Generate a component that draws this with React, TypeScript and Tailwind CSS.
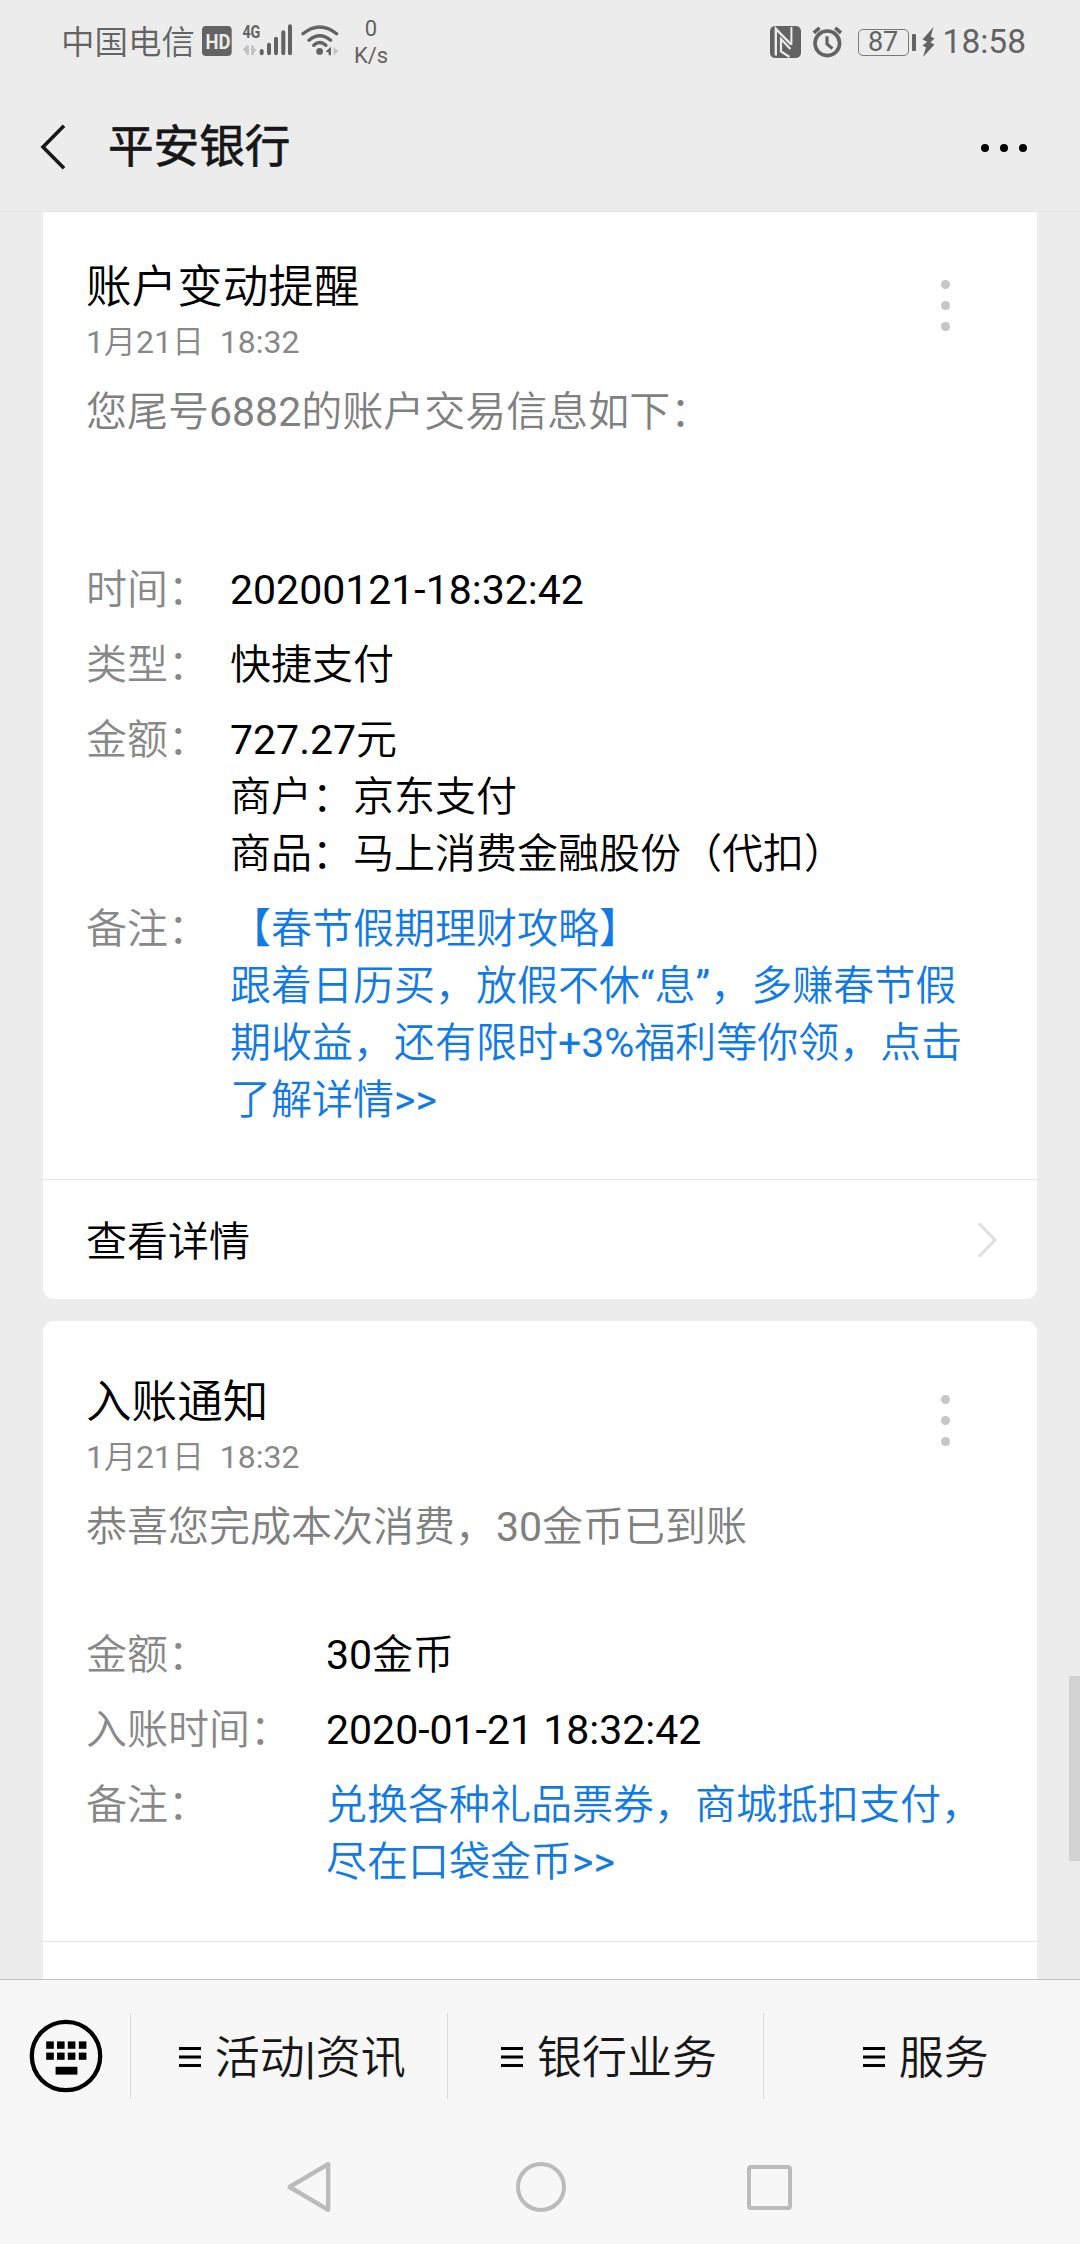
import React from "react";

const FONT = "font-[Roboto,'Noto_Sans_CJK_SC_DemiLight','Noto_Sans_CJK_SC',sans-serif]";
const GREY = "#636363";

type Row = { label: string; value: string; link?: boolean };

type Notice = {
  title: string;
  date: string;
  summary: string;
  rows: Row[];
  wide?: boolean;
  action?: string;
};

const NOTICES: Notice[] = [
  {
    title: "账户变动提醒",
    date: "1月21日\u00a0 18:32",
    summary: "您尾号6882的账户交易信息如下：",
    rows: [
      { label: "时间：", value: "20200121-18:32:42" },
      { label: "类型：", value: "快捷支付" },
      { label: "金额：", value: "727.27元\n商户：京东支付\n商品：马上消费金融股份（代扣）" },
      {
        label: "备注：",
        value: "【春节假期理财攻略】\n跟着日历买，放假不休“息”，多赚春节假\n期收益，还有限时+3%福利等你领，点击\n了解详情>>",
        link: true,
      },
    ],
    action: "查看详情",
  },
  {
    title: "入账通知",
    date: "1月21日\u00a0 18:32",
    summary: "恭喜您完成本次消费，30金币已到账",
    rows: [
      { label: "金额：", value: "30金币" },
      { label: "入账时间：", value: "2020-01-21 18:32:42" },
      { label: "备注：", value: "兑换各种礼品票券，商城抵扣支付，\n尽在口袋金币>>", link: true },
    ],
    wide: true,
  },
];

const TABS = ["活动|资讯", "银行业务", "服务"];

function SignalIcons() {
  return (
    <svg className="ml-[6px] h-[44px] w-[140px] shrink-0" viewBox="200 20 140 44" aria-hidden>
      <rect x="201" y="26" width="29.7" height="30" rx="4" fill={GREY} />
      <text x="204.6" y="48.6" fontSize="20" fontWeight="700" fill="#ececec" textLength="25" lengthAdjust="spacingAndGlyphs">
        HD
      </text>
      <text x="241.4" y="38.3" fontSize="18.5" fontWeight="700" fill={GREY} textLength="18" lengthAdjust="spacingAndGlyphs">
        4G
      </text>
      <path d="M242 49.5 L246.2 44.8 V55 M250.5 44.8 V55 L255.5 50.2 Z" fill="#c2c2c2" />
      <path d="M246.6 45.5 V55 M251.5 45.5 V55" stroke="#c2c2c2" strokeWidth="2.6" />
      <path
        d="M260.7 51 V53.2 M268 44.7 V53.2 M275 38.7 V53.2 M282.3 32.3 V53.2 M289 26.3 V53.2"
        stroke={GREY}
        strokeWidth="4"
        strokeLinecap="round"
      />
      <path
        d="M302 33.8 Q318.7 20.2 335.6 33.8 M308 40.2 Q318.7 31.4 329.6 40.2 M312.8 45.3 Q318.7 39.8 324.8 45.3"
        fill="none"
        stroke={GREY}
        strokeWidth="3.4"
        strokeLinecap="round"
      />
      <circle cx="318.6" cy="51.4" r="3.4" fill={GREY} />
      <path d="M324.6 51.4 L330 46.8 V55.2 H327.6 V52.4 Z" fill={GREY} />
      <path d="M332.6 47 V55.4 L337.2 51 Z" fill="#c2c2c2" />
    </svg>
  );
}

function NfcIcon() {
  return (
    <svg className="h-8 w-[31px]" viewBox="0 0 31 32" fill="none" stroke="#ececec" aria-hidden>
      <rect width="31" height="32" rx="5" fill={GREY} stroke="none" />
      <path d="M5.8 29.5 V2.8 L21.2 18.5" strokeWidth="2.4" />
      <path d="M21.4 1 V19" strokeWidth="2" />
      <path d="M20.4 23 L11 13 V25.5 L19.5 31" strokeWidth="2.2" />
    </svg>
  );
}

function AlarmIcon() {
  return (
    <svg className="ml-[11px] h-8 w-[31px]" viewBox="0 0 31 32" fill="none" stroke={GREY} aria-hidden>
      <circle cx="15.3" cy="17.3" r="12.3" strokeWidth="3.6" />
      <path d="M1.8 6.8 L7.6 1.8 M29 6.8 L23.2 1.8" strokeWidth="3.6" />
      <path d="M15 10.3 V18 L20.4 22.6" strokeWidth="3.2" />
    </svg>
  );
}

function StatusBar() {
  return (
    <div className="flex h-[84px] shrink-0 items-center pl-[61px] pr-[54px] text-[#636363]">
      <span className="pt-[2px] text-[33.5px] leading-[40px]">中国电信</span>
      <SignalIcons />
      <div className="ml-[12px] w-[36px] text-center text-[22px] leading-[27px]">
        <div>0</div>
        <div>K/s</div>
      </div>
      <div className="ml-auto flex items-center">
        <NfcIcon />
        <AlarmIcon />
        <div className="ml-[15px] flex h-[27px] w-[51px] items-center justify-center rounded-[5px] border-[1.5px] border-[#7a7a7a] text-[27px] leading-none">
          87
        </div>
        <div className="ml-[3px] h-[17px] w-[4px] rounded-[1px] bg-[#636363]" />
        <svg className="ml-[6px] h-[30px] w-[13px]" viewBox="0 0 13 30" aria-hidden>
          <path d="M11.5 0 L0.5 12.5 L5.2 14.8 L0.5 18.5 L4 20.5 L1 30 L12.5 17.5 L8.4 15.5 L12.5 11.5 L8.8 9.6 Z" fill={GREY} />
        </svg>
        <span className="ml-[8px] text-[33.5px] leading-[40px]">18:58</span>
      </div>
    </div>
  );
}

function Header() {
  return (
    <div className="flex h-[128px] shrink-0 items-center border-b border-[#e4e4e4] pl-[38px] pr-[53px]">
      <svg className="h-12 w-[30px]" viewBox="0 0 30 48" fill="none" stroke="#171717" strokeWidth="3.6" aria-hidden>
        <path d="M26 1.8 L5 23 L26 44.2" />
      </svg>
      <h1 className="ml-10 pb-[9px] font-['Noto_Sans_CJK_SC',sans-serif] text-[45.6px] font-normal leading-[60px] text-[#171717] [-webkit-text-stroke:0.7px_#171717]">
        平安银行
      </h1>
      <div className="ml-auto flex gap-[11px]">
        {[0, 1, 2].map((i) => (
          <i key={i} className="size-[8px] rounded-full bg-black" />
        ))}
      </div>
    </div>
  );
}

function NoticeCard({ notice }: { notice: Notice }) {
  const { title, date, summary, rows, wide, action } = notice;

  return (
    <section className="shrink-0 rounded-[11px] bg-white">
      <div className="flex px-[43px] pt-[50px]">
        <div className="flex-1">
          <h2 className="text-[45.6px] leading-[64px] text-black">{title}</h2>
          <p className="-mt-[2px] text-[32px] leading-[48px] text-[#888]">{date}</p>
          <p className="mt-[18px] text-[41px] leading-[57px] text-[#808080]">{summary}</p>
        </div>
        <div className="mr-[44px] mt-[24px] flex flex-col gap-[12px]">
          {[0, 1, 2].map((i) => (
            <i key={i} className="size-[9px] rounded-full bg-[#c6c6c6]" />
          ))}
        </div>
      </div>

      <div className={`flex flex-col gap-[18px] px-[43px] pb-[50px] text-[41px] leading-[57px] ${wide ? "pt-[71px]" : "pt-[121px]"}`}>
        {rows.map((row) => (
          <div key={row.label} className="flex">
            <span className={`shrink-0 text-[#888] ${wide ? "w-[240px]" : "w-[144px]"}`}>{row.label}</span>
            <span className={`whitespace-pre ${row.link ? "text-[#127ae4]" : "text-black"}`}>{row.value}</span>
          </div>
        ))}
      </div>

      <div className="flex h-[120px] items-center justify-between border-t border-[#e2e2e2] pl-[43px] pr-[40px] text-[41px] text-black">
        {action && (
          <>
            <span className="pt-[5px] leading-[57px]">{action}</span>
            <svg className="h-[36px] w-[20px]" viewBox="0 0 20 36" fill="none" stroke="#dedede" strokeWidth="2.8" aria-hidden>
              <path d="M2 1.5 L18 18 L2 34.5" />
            </svg>
          </>
        )}
      </div>
    </section>
  );
}

function KeyboardIcon() {
  return (
    <svg className="ml-px h-[74px] w-[74px]" viewBox="0 0 74 74" aria-hidden>
      <circle cx="37" cy="37" r="34.2" fill="none" stroke="#000" strokeWidth="4.3" />
      {[17.2, 28, 38.8, 49.8].map((x) => (
        <React.Fragment key={x}>
          <rect x={x} y="22.4" width="7.6" height="7.4" />
          <rect x={x} y="33.6" width="7.6" height="7.2" />
        </React.Fragment>
      ))}
      <rect x="26.6" y="47.8" width="21.8" height="7.8" />
    </svg>
  );
}

function MenuBar() {
  return (
    <div className="flex h-[153px] shrink-0 items-center border-t border-[#c2c2c2]">
      <div className="flex w-[130px] justify-center">
        <KeyboardIcon />
      </div>
      {TABS.map((tab) => (
        <div key={tab} className="flex h-[86px] flex-1 items-center justify-center border-l border-[#dadada] pl-[7px] text-[#171717]">
          <svg className="mr-[14px] mt-[2px] h-5 w-[22px]" viewBox="0 0 22 20" stroke="#000" strokeWidth="3" aria-hidden>
            <path d="M0 1.5 H22 M0 10 H22 M0 18.5 H22" />
          </svg>
          <span className="pt-[5px] text-[45px] leading-[60px]">{tab}</span>
        </div>
      ))}
    </div>
  );
}

function SystemNav() {
  return (
    <div className="flex h-[112px] shrink-0 items-center justify-center gap-[181px] pb-[2px] pr-[4px]">
      <svg className="h-[52px] w-[50px]" viewBox="0 0 50 52" fill="none" stroke="#bbb" strokeWidth="4.4" strokeLinejoin="round" aria-hidden>
        <path d="M43.2 3.2 V48.8 L4.6 26 Z" />
      </svg>
      <div className="size-[50px] rounded-full border-4 border-[#bbb]" />
      <div className="size-[45px] rounded-[4px] border-4 border-[#bbb]" />
    </div>
  );
}

export default function App() {
  return (
    <div className={`flex h-[2244px] w-[1080px] flex-col overflow-hidden bg-[#ececec] ${FONT}`}>
      <StatusBar />
      <Header />
      <main className="relative flex min-h-0 flex-1 flex-col overflow-hidden px-[43px]">
        <div className="-mt-[6px] flex flex-col gap-[22px]">
          {NOTICES.map((notice) => (
            <NoticeCard key={notice.title} notice={notice} />
          ))}
        </div>
        <div className="absolute right-0 top-[1464px] h-[185px] w-[11px] bg-[#d2d2d2]" />
      </main>
      <footer className="bg-[#f7f7f7]">
        <MenuBar />
        <SystemNav />
      </footer>
    </div>
  );
}
